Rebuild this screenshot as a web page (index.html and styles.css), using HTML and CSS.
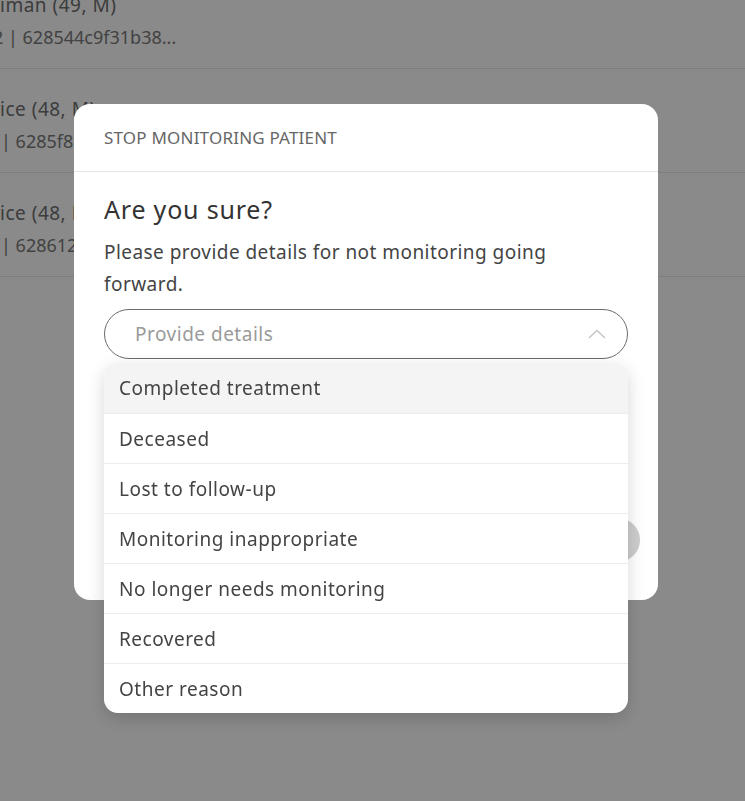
FILE: index.html
```html
<!DOCTYPE html>
<html lang="en">
<head>
<meta charset="utf-8">
<title>Stop monitoring patient</title>
<link rel="stylesheet" href="styles.css">
</head>
<body>
<ul class="patients">
  <li class="patient">
    <div class="p-name">iman (49, M)</div>
    <div class="p-id first"><span class="clip">2</span> | 628544c9f31b38...</div>
  </li>
  <li class="patient">
    <div class="p-name">ice (48, M)</div>
    <div class="p-id">| 6285f89c71a4e...</div>
  </li>
  <li class="patient">
    <div class="p-name">ice (48, F)</div>
    <div class="p-id">| 628612d0b8e7a...</div>
  </li>
</ul>

<div class="overlay">
  <div class="modal">
    <div class="modal-header">STOP MONITORING PATIENT</div>
    <div class="modal-body">
      <h2 class="question">Are you sure?</h2>
      <p class="desc">Please provide details for not monitoring going forward.</p>
      <div class="select-wrap">
        <div class="select">
          <span class="placeholder">Provide details</span>
          <svg class="chevron" width="18" height="10" viewBox="0 0 18 10"><path d="M1 9 L9 1.5 L17 9" fill="none" stroke="#c4c4c4" stroke-width="1.4"/></svg>
        </div>
        <ul class="menu">
          <li class="option active">Completed treatment</li>
          <li class="option">Deceased</li>
          <li class="option">Lost to follow-up</li>
          <li class="option">Monitoring inappropriate</li>
          <li class="option">No longer needs monitoring</li>
          <li class="option">Recovered</li>
          <li class="option">Other reason</li>
        </ul>
      </div>
    </div>
    <div class="modal-footer">
      <button class="btn-cancel">Cancel</button>
      <button class="btn-confirm">Confirm</button>
    </div>
  </div>
</div>
</body>
</html>
```
FILE: styles.css
```css
* { box-sizing: border-box; }
html, body { margin: 0; padding: 0; }
body {
  width: 745px;
  height: 801px;
  overflow: hidden;
  background: #ffffff;
  font-family: "Noto Sans", "Open Sans", sans-serif;
  color: #333;
}
.patients {
  list-style: none;
  margin: -35px 0 0 0;
  padding: 0;
}
.patient {
  height: 104px;
  border-bottom: 1px solid #e8e8e8;
  padding-top: 24px;
}
.p-name {
  font-size: 19px;
  letter-spacing: 0.5px;
  line-height: 32px;
  color: #707070;
}
.p-id {
  font-size: 18px;
  line-height: 32px;
  color: #7a7a7a;
  padding-left: 1px;
}
.p-id.first { padding-left: 0; }
.clip { margin-left: -7px; }

.overlay {
  position: fixed;
  inset: 0;
  background: rgba(0, 0, 0, 0.46);
  padding: 104px 0 0 74px;
}
.modal {
  width: 584px;
  height: 496px;
  background: #fff;
  border-radius: 16px;
  display: flex;
  flex-direction: column;
}
.modal-header {
  height: 68px;
  padding: 0 30px;
  display: flex;
  align-items: center;
  border-bottom: 1px solid #e6e6e6;
  font-size: 17px;
  letter-spacing: 0.2px;
  color: #666;
}
.modal-body {
  padding: 20px 30px 0 30px;
}
.question {
  margin: 0;
  font-size: 25px;
  letter-spacing: 0.8px;
  font-weight: 400;
  line-height: 34px;
  color: #333;
}
.desc {
  margin: 10px 0 0 0;
  font-size: 19px;
  letter-spacing: 0.45px;
  line-height: 32px;
  color: #444;
  padding-right: 40px;
}
.select-wrap {
  position: relative;
  margin-top: 9px;
}
.select {
  height: 50px;
  border: 1.5px solid #6b6b6b;
  border-radius: 25px;
  display: flex;
  align-items: center;
  justify-content: space-between;
  padding: 0 21px 0 30px;
}
.placeholder {
  font-size: 19px;
  letter-spacing: 0.5px;
  color: #9a9a9a;
}
.menu {
  position: absolute;
  left: 0;
  right: 0;
  top: 54px;
  list-style: none;
  margin: 0;
  padding: 0;
  background: #fff;
  border-radius: 14px;
  overflow: hidden;
  box-shadow: 0 6px 18px rgba(0, 0, 0, 0.16);
  z-index: 2;
}
.option {
  height: 50px;
  display: flex;
  align-items: center;
  padding-left: 15px;
  font-size: 19px;
  letter-spacing: 0.5px;
  color: #444;
  border-top: 1px solid #ececec;
}
.option:first-child { border-top: none; }
.option.active { background: #f4f4f4; }

.modal-footer {
  margin-top: auto;
  display: flex;
  justify-content: flex-end;
  gap: 14px;
  padding: 0 18px 38px 30px;
}
.modal-footer button {
  height: 44px;
  border: none;
  border-radius: 22px;
  font-family: inherit;
  font-size: 16px;
  padding: 0 28px;
}
.btn-cancel { background: #fff; color: #333; border: 1px solid #666; }
.btn-confirm { background: #cdcdcd; color: #fff; }
```
